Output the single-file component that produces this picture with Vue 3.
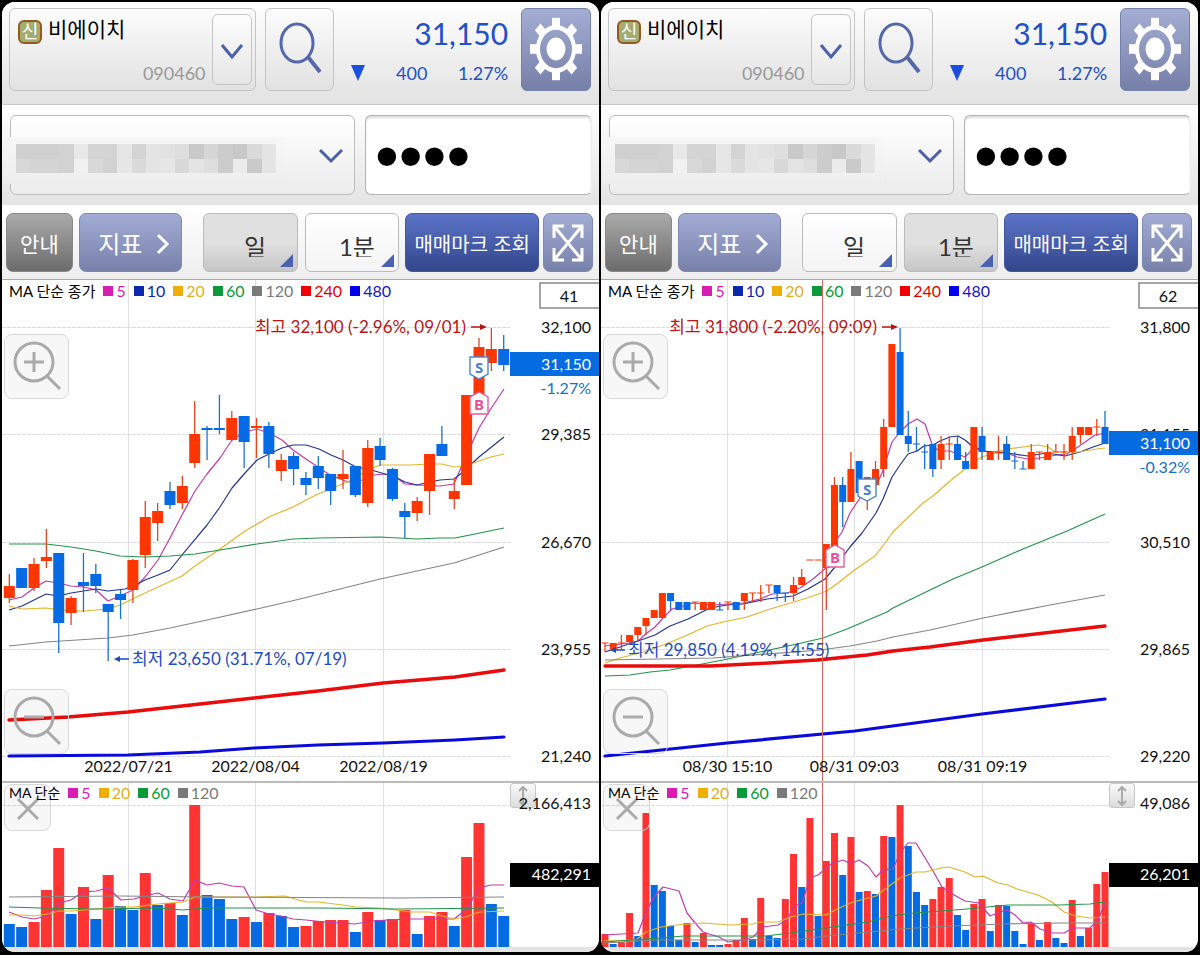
<script setup>
const priceLegend = [
  ['5', '#d81cb4'], ['10', '#0b28b0'], ['20', '#f0ae00', '#e0b020'], ['60', '#0a9a3a'],
  ['120', '#7a7a7a'], ['240', '#f00000', '#e00000'], ['480', '#0000f0', '#1414c8'],
]
const volumeLegend = [
  ['5', '#d81cb4'], ['20', '#f0ae00', '#e0b020'], ['60', '#0a9a3a'], ['120', '#7a7a7a'],
]
const gridX = [128.5, 255.5, 383.5]
const gridY = [327.5, 434.5, 542.5, 649.5, 756.5]
const mosaic = [
  'd0', 'd0', 'd0', 'd2', 'e8', 'd4', 'd4', 'e6', 'd4', 'e4', 'e2', 'de', 'c9', 'd6', 'cc', 'c8', 'da', 'e4',
  'd8', 'd4', 'd4', 'd2', 'f1', 'd8', 'd2', 'e6', 'da', 'e4', 'e6', 'd8', 'e4', 'de', 'cc', 'eb', 'ca', 'e4',
]
const teeth = [0, 45, 90, 135, 180, 225, 270, 315]

/* candle: kind, high, body top, body bottom, low */
const daily = [
  'r 574 586 598 603', 'b 568 568 588 588', 'r 558 564 588 591', 'r 529 557 561 568', 'b 553 553 623 653',
  'r 596 598 613 625', 'b 553 582 586 612', 'b 564 574 586 593', 'b 604 604 612 661', 'b 590 594 600 619',
  'r 559 560 590 603', 'r 501 517 555 568', 'r 503 511 523 541', 'b 482 491 505 509', 'r 476 486 503 509',
  'r 401 434 463 468', 'b 426 428 430 460', 'b 395 428 430 434', 'r 411 418 440 441', 'b 416 416 442 468',
  'r 418 426 428 458', 'b 422 426 454 468', 'r 454 460 471 481', 'b 452 456 469 485', 'b 472 478 485 495',
  'b 456 466 478 489', 'b 474 474 491 505', 'r 450 474 479 489', 'b 466 466 495 497', 'r 440 448 503 507',
  'b 438 446 460 466', 'b 468 469 499 501', 'b 503 511 517 538', 'r 497 501 513 521', 'r 454 454 491 515',
  'b 426 444 456 456', 'r 478 491 499 509', 'r 395 395 485 485', 'r 338 347 396 396', 'r 328 349 363 371',
  'b 335 349 365 371',
]
const minute = [
  'r 643 643 643 652', 'r 643 643 649 649', 'r 635 643 643 649', 'r 635 635 642 645', 'r 627 627 635 642',
  'r 618 618 626 635', 'r 610 610 618 618', 'r 593 593 618 618', 'b 593 593 601 610', 'b 602 602 610 610',
  'b 602 602 610 610', 'r 602 602 602 610', 'r 602 602 610 610', 'r 602 602 610 610', 'b 602 610 610 610',
  'r 602 602 602 610', 'b 602 602 610 610', 'r 593 593 601 610', 'r 593 593 593 602', 'r 585 593 593 602',
  'r 585 585 585 593', 'b 585 585 593 601', 'b 593 593 593 602', 'r 577 585 593 601', 'r 569 577 585 585',
  'r 560 560 560 560', 'r 560 560 560 560', 'r 544 544 568 610', 'r 477 485 560 560', 'b 477 485 502 527',
  'r 452 469 502 502', 'b 461 461 493 493', 'r 477 477 493 510', 'r 461 469 485 485', 'r 419 427 469 477',
  'r 344 344 427 427', 'b 328 352 435 435', 'b 411 436 444 452', 'b 427 444 444 452', 'b 444 452 452 469',
  'b 444 444 469 477', 'r 436 444 460 469', 'r 436 444 444 460', 'b 436 444 460 460', 'b 452 461 469 469',
  'r 427 427 469 469', 'b 427 436 452 460', 'r 452 452 460 460', 'r 436 452 452 460', 'b 436 444 460 460',
  'b 452 461 461 469', 'b 461 469 469 469', 'r 444 452 469 469', 'r 452 452 452 460', 'r 444 452 460 460',
  'r 444 452 452 452', 'r 444 452 452 460', 'r 427 436 452 460', 'r 427 427 435 444', 'r 427 427 435 435',
  'r 419 427 427 436', 'b 411 427 444 444',
]
const build = (rows, first, last, width) => rows.map((row, i) => {
  const [kind, high, top, bottom, low] = row.split(' ')
  const flat = top === bottom
  return {
    kind, high: +high, low: +low, width,
    x: first + ((last - first) * i) / (rows.length - 1),
    y: flat ? +top - 0.5 : +top,
    h: flat ? 1 : bottom - top,
  }
})
const volumes = (kinds, tops, first, last, width) => tops.map((top, i) => ({
  kind: kinds[i], top, width, x: first + ((last - first) * i) / (tops.length - 1),
}))

const panels = [
  {
    name: 'day', count: '41', active: 'day',
    labels: ['32,100', '29,385', '26,670', '23,955', '21,240'],
    tag: '31,150', tagY: 352, change: '-1.27%',
    dates: ['2022/07/21', '2022/08/04', '2022/08/19'],
    high: { text: '최고 32,100 (-2.96%, 09/01)', x: 466, arrow: 471 },
    low: { text: '최저 23,650 (31.71%, 07/19)', x: 132, y: 659, arrow: 114 },
    sell: { x: 479, y: 357 }, buy: { x: 479, y: 392 }, cross: null,
    volumeMax: '2,166,413', volumeTag: '482,291',
    candles: build(daily, 9.3, 503.7, 11),
    lines: [
      ['pink', '9,600 22,597 34,588 46,581 58,583 71,586 84,587 96,590 108,601 120,596 133,590 145,577 158,560 170,538 182,515 195,491 207,474 220,458 232,440 245,432 257,429 269,433 282,440 293,450 306,459 315,465 330,475 348,482 363,480 373,475 385,474 397,478 405,484 417,485 440,486 454,484 463,463 479,428 490,410 504,389'],
      ['navy', '9,610 22,606 46,594 58,596 71,593 96,589 108,591 125,589 133,586 145,580 158,575 170,570 182,555 207,525 220,507 232,488 245,473 257,460 269,454 282,448 293,445 306,445 319,449 331,455 343,460 356,467 368,469 385,474 397,478 405,482 417,485 430,482 440,480 454,479 463,472 479,457 504,437'],
      ['gold', '9,606 22,609 46,608 71,611 84,611 108,609 120,605 145,593 182,576 195,566 220,549 245,531 269,517 293,507 306,500 318,494 331,489 356,478 368,470 380,465 410,465 430,464 442,464 454,467 466,466 479,461 491,457 504,454'],
      ['green', '9,544 46,544 71,547 96,551 120,556 145,557 170,556 195,554 220,550 257,544 293,539 319,538 380,537 417,539 440,538 455,538 470,535 504,528'],
      ['gray', '9,646 46,642 108,638 133,635 170,628 207,620 257,609 300,599 380,579 454,563 504,547'],
      ['red', '9,720 68,717 128,712 191,705 254,698 318,691 383,683 455,677 504,670'],
      ['blue', '9,756 128,755 200,752 254,748 318,745 383,743 455,740 504,737'],
    ],
    bars: volumes('bbrrrbrbrbbrbrbrbbbrbrbbrrrrbrbrrbrrbrrbb',
      [924, 927, 922, 890, 848, 914, 887, 919, 875, 906, 910, 873, 905, 903, 915, 805, 895, 899, 919, 917, 922, 913, 916, 927, 926, 921, 920, 920, 932, 912, 920, 919, 910, 934, 916, 912, 926, 857, 823, 904, 916],
      9.3, 503.7, 11),
    volumeLines: [
      ['pink', '9,912 22,917 34,919 47,916 59,903 71,900 83,892 96,891 108,888 121,900 134,899 145,896 158,893 170,899 183,901 195,880 207,885 219,883 232,886 244,887 256,910 269,914 281,916 293,919 306,920 325,922 355,924 373,921 387,920 411,919 436,919 454,919 467,909 479,888 491,885 504,885'],
      ['gold', '9,915 22,915 34,916 47,914 59,911 71,911 96,909 121,907 134,907 158,904 183,902 195,897 207,897 256,897 285,896 295,899 306,902 318,902 343,905 355,907 380,908 411,912 430,912 442,916 454,919 466,917 479,912 504,911'],
      ['green', '9,907 40,908 96,909 158,908 183,910 207,908 320,908 400,909 504,908'],
      ['gray', '9,897 120,896 207,897 400,898 504,897'],
    ],
  },
  {
    name: 'minute', count: '62', active: 'minute',
    labels: ['31,800', '31,155', '30,510', '29,865', '29,220'],
    tag: '31,100', tagY: 431, change: '-0.32%',
    dates: ['08/30 15:10', '08/31 09:03', '08/31 09:19'],
    high: { text: '최고 31,800 (-2.20%, 09:09)', x: 278, arrow: 283 },
    low: { text: '최저 29,850 (4.19%, 14:55)', x: 29, y: 650, arrow: 11 },
    sell: { x: 268, y: 479 }, buy: { x: 236, y: 545 }, cross: 223.5,
    volumeMax: '49,086', volumeTag: '26,201',
    candles: build(minute, 6, 506, 7),
    lines: [
      ['pink', '6,646 30,643 39,641 48,633 56,627 64,618 73,609 81,607 94,603 114,605 144,603 161,599 173,594 188,593 201,588 214,579 228,567 234,545 243,532 251,513 261,498 277,486 283,473 293,442 301,432 309,424 318,419 326,424 334,447 341,451 351,451 366,457 376,447 383,450 391,453 408,453 418,457 429,459 441,458 458,455 468,454 479,447 496,435 506,433'],
      ['navy', '6,652 18,648 39,641 56,635 71,626 89,619 111,608 128,605 144,604 168,599 194,596 209,589 226,579 236,567 251,547 263,533 277,513 284,499 293,477 301,465 309,454 318,451 325,446 334,445 341,441 351,437 359,436 366,440 374,447 383,451 408,453 429,456 448,453 466,456 481,452 494,447 506,443'],
      ['gold', '6,663 21,658 44,652 64,645 84,637 108,626 124,622 148,617 168,610 188,604 208,598 228,591 243,580 254,571 276,556 286,543 294,532 301,525 324,503 334,496 351,481 366,469 381,458 394,453 408,449 424,447 439,445 449,447 456,452 479,452 498,449 506,448'],
      ['green', '6,676 31,675 51,672 71,670 98,665 124,660 161,652 198,644 224,638 248,629 288,612 294,608 331,590 354,579 383,567 424,549 468,531 506,514'],
      ['gray', '6,660 114,658 221,650 251,646 278,641 294,637 331,630 384,618 451,605 506,595'],
      ['red', '6,666 111,666 170,663 218,660 268,655 294,651 331,647 384,640 506,626'],
      ['blue', '6,756 128,743 256,731 383,714 506,699'],
    ],
    bars: volumes('rbrrbrbbbbrbrbbrrrbrbbrrbrbrrbrbrbrbrbbbrrrbbrrbrbbbrbrbbrbrrr',
      [934, 944, 942, 913, 936, 813, 885, 891, 926, 940, 923, 942, 933, 945, 945, 944, 940, 918, 939, 898, 936, 938, 899, 854, 887, 818, 916, 861, 833, 875, 837, 892, 891, 894, 836, 837, 805, 846, 892, 905, 899, 887, 878, 915, 930, 904, 899, 931, 905, 906, 931, 944, 923, 940, 922, 938, 943, 900, 936, 928, 884, 872],
      6, 506, 7),
    volumeLines: [
      ['pink', '5,935 39,933 47,912 55,897 64,887 80,891 88,913 97,924 104,932 120,937 129,942 143,940 154,937 164,927 179,925 188,920 195,906 203,903 211,878 219,875 227,868 234,863 244,860 252,864 260,860 269,866 277,877 284,870 294,869 301,853 309,843 317,843 334,871 343,887 355,895 366,901 380,903 391,916 399,913 408,910 416,915 424,923 432,922 441,929 453,933 465,933 474,928 491,928 499,920 506,903'],
      ['gold', '5,941 37,940 47,932 62,927 78,925 104,923 131,925 154,924 162,922 179,922 192,917 204,914 227,915 238,909 254,902 277,896 286,889 301,878 317,872 326,872 342,868 350,867 366,872 376,877 384,876 399,883 409,885 418,889 439,895 453,902 465,912 477,916 491,918 506,917'],
      ['green', '5,942 47,939 85,936 166,936 192,933 227,928 269,922 292,916 315,913 368,909 409,905 460,905 491,904 506,902'],
      ['gray', '5,943 58,940 154,940 204,939 227,936 269,932 300,929 353,926 403,924 460,923 506,923'],
    ],
  },
]
</script>

<template>
  <main class="screens">
    <section v-for="p in panels" :key="p.name" class="panel">
      <header class="quote">
        <div class="stock">
          <span class="badge">신</span>
          <span class="stock-name">비에이치</span>
          <span class="stock-code">090460</span>
          <button class="stock-open" type="button" aria-label="종목 선택">
            <svg width="24" height="18" viewBox="0 0 24 18"><path d="M2 2 12 14 22 2" class="chevron" /></svg>
          </button>
        </div>
        <button class="search" type="button" aria-label="종목 검색">
          <svg width="46" height="56" viewBox="0 0 46 56">
            <ellipse cx="20" cy="23" rx="16" ry="19" /><path d="M31 37 43 52" />
          </svg>
        </button>
        <div class="price">
          <strong>31,150</strong>
          <div class="price-row">
            <svg width="14" height="16" viewBox="0 0 14 16"><path d="M0 0h14L7 16z" fill="#1a4fe0" /></svg>
            <span class="diff">400</span><span class="rate">1.27%</span>
          </div>
        </div>
        <button class="settings" type="button" aria-label="설정">
          <svg width="54" height="64" viewBox="-27 -32 54 64">
            <g transform="scale(1 1.2)" fill="#fff">
              <rect v-for="a in teeth" :key="a" x="-4" y="-26" width="8" height="8" :transform="`rotate(${a})`" />
              <circle r="18" fill="none" stroke="#fff" stroke-width="4" /><circle r="9.5" />
            </g>
          </svg>
        </button>
      </header>

      <div class="account-row">
        <div class="account">
          <select aria-label="계좌 선택"><option></option></select>
          <div class="mosaic" aria-hidden="true">
            <i v-for="(c, i) in mosaic" :key="i" :style="{ background: '#' + c + c + c }"></i>
          </div>
          <svg class="account-arrow" width="24" height="16" viewBox="0 0 24 16"><path d="M1 2 12 13 23 2" class="chevron" /></svg>
        </div>
        <input class="password" type="password" value="0000" aria-label="계좌 비밀번호" />
      </div>

      <nav class="tools">
        <button class="guide" type="button">안내</button>
        <button class="indicator" type="button">지표
          <svg width="14" height="22" viewBox="0 0 14 22"><path d="M2 2 11 11 2 20" fill="none" stroke="#fff" stroke-width="3" /></svg>
        </button>
        <div class="period day" :class="{ active: p.active === 'day' }">
          <select aria-label="일봉 주기"><option>일</option></select>
        </div>
        <div class="period minute" :class="{ active: p.active === 'minute' }">
          <select aria-label="분봉 주기"><option>1분</option></select>
        </div>
        <button class="marks" type="button">매매마크 조회</button>
        <button class="expand" type="button" aria-label="전체 화면">
          <svg width="32" height="38" viewBox="0 0 32 38">
            <path d="M2 2 30 36M30 2 2 36M2 14V2h10M20 2h10v12M30 24v12H20M12 36H2V24" />
          </svg>
        </button>
      </nav>

      <div class="chart price-chart">
        <svg class="plot" viewBox="2 280 597 501" role="img" aria-label="가격 차트">
          <g class="grid">
            <path v-for="x in gridX" :key="x" :d="`M${x} 280V756`" />
            <path v-for="y in gridY" :key="y" class="dotted" :d="`M2 ${y}H510`" />
          </g>
          <path v-for="l in p.lines" :key="l[0]" class="line" :class="l[0]" :d="'M' + l[1]" />
          <g v-for="(c, i) in p.candles" :key="i" :class="'candle-' + c.kind">
            <path :d="`M${c.x} ${c.high}V${c.low}`" />
            <rect :x="c.x - c.width / 2" :y="c.y" :width="c.width" :height="c.h" />
          </g>
          <path v-if="p.cross" class="cross" :d="`M${p.cross} 280V781`" />

          <text v-for="(t, i) in p.labels" :key="t" class="axis" x="591" :y="gridY[i] + 5">{{ t }}</text>
          <rect x="540" y="283" width="62" height="25" class="count-box" />
          <text x="569" y="302" class="count">{{ p.count }}</text>
          <rect x="510" :y="p.tagY" width="89" height="24" fill="#056be0" />
          <text x="591" :y="p.tagY + 18" class="axis light">{{ p.tag }}</text>
          <text x="591" :y="p.tagY + 42" class="axis change">{{ p.change }}</text>
          <text v-for="(d, i) in p.dates" :key="d" class="date" :x="gridX[i]" y="772">{{ d }}</text>

          <g class="note high">
            <text :x="p.high.x" y="333">{{ p.high.text }}</text>
            <path :d="`M${p.high.arrow} 327h10`" /><path class="tip" :d="`M${p.high.arrow + 9} 324l7 3-7 3z`" />
          </g>
          <g class="note low">
            <text :x="p.low.x" :y="p.low.y + 6">{{ p.low.text }}</text>
            <path :d="`M${p.low.arrow + 5} ${p.low.y}h10`" />
            <path class="tip" :d="`M${p.low.arrow + 6} ${p.low.y - 3}l-6 3 6 3z`" />
          </g>
          <g class="mark sell" :transform="`translate(${p.sell.x} ${p.sell.y})`">
            <path d="M-9 0H9V17L0 22-9 17z" /><text y="16">S</text>
          </g>
          <g class="mark buy" :transform="`translate(${p.buy.x} ${p.buy.y})`">
            <path d="M-9 22H9V5L0 0-9 5z" /><text y="18">B</text>
          </g>
        </svg>
        <div class="legend">
          <span>MA 단순 종가</span>
          <span v-for="l in priceLegend" :key="l[0]" class="key" :style="{ color: l[2] || l[1] }">
            <i :style="{ background: l[1] }"></i>{{ l[0] }}
          </span>
        </div>
        <button class="float zoom-in" type="button" aria-label="확대">
          <svg width="52" height="52" viewBox="0 0 52 52"><circle cx="23" cy="21" r="19" /><path d="M36 35 49 48M13 21h20M23 11v20" /></svg>
        </button>
        <button class="float zoom-out" type="button" aria-label="축소">
          <svg width="52" height="52" viewBox="0 0 52 52"><circle cx="23" cy="21" r="19" /><path d="M36 35 49 48M13 21h20" /></svg>
        </button>
      </div>

      <div class="chart volume-chart">
        <button class="resize" type="button" aria-label="차트 높이 조절">
          <svg width="12" height="20" viewBox="0 0 12 20"><path d="M6 1v18M2 5l4-4 4 4M2 15l4 4 4-4" /></svg>
        </button>
        <svg class="plot" viewBox="2 783 597 164" role="img" aria-label="거래량 차트">
          <g class="grid">
            <path v-for="x in gridX" :key="x" :d="`M${x} 783V947`" /><path class="dotted" d="M2 805.5H510" />
          </g>
          <rect v-for="(b, i) in p.bars" :key="i" :class="'bar-' + b.kind" :x="b.x - b.width / 2" :y="b.top" :width="b.width" :height="947 - b.top" />
          <path v-for="l in p.volumeLines" :key="l[0]" class="line" :class="l[0]" :d="'M' + l[1]" />
          <path v-if="p.cross" class="cross" :d="`M${p.cross} 783V947`" />
          <text x="591" y="809" class="axis">{{ p.volumeMax }}</text>
          <rect x="510" y="863" width="89" height="24" />
          <text x="591" y="880" class="axis light">{{ p.volumeTag }}</text>
        </svg>
        <div class="legend">
          <span>MA 단순</span>
          <span v-for="l in volumeLegend" :key="l[0]" class="key" :style="{ color: l[2] || l[1] }">
            <i :style="{ background: l[1] }"></i>{{ l[0] }}
          </span>
        </div>
        <button class="float close" type="button" aria-label="지표 닫기">
          <svg width="24" height="24" viewBox="0 0 24 24"><path d="M2 2 22 22M22 2 2 22" /></svg>
        </button>
      </div>
      <footer></footer>
    </section>
  </main>
</template>

<style>
body { margin: 0; background: #000; }
</style>

<style scoped>
* { box-sizing: border-box; }
.screens {
  display: grid; grid-template-columns: 1fr 1fr; gap: 2px; padding: 2px 2px 3px; background: #000;
  font-family: Lato, "Noto Sans CJK KR", sans-serif; font-size: 16px; line-height: 20px; color: #111;
}
.panel { border-radius: 13px; overflow: hidden; background: #fff; min-width: 0; }
button, select, input { font: inherit; color: inherit; margin: 0; padding: 0; }
button { display: flex; align-items: center; justify-content: center; border: 1px solid #bbb; border-radius: 6px; }
svg { display: block; }
.chevron { fill: none; stroke: #4a60a8; stroke-width: 3; }

.quote {
  display: grid; grid-template-columns: minmax(0, 247fr) minmax(0, 79fr) minmax(0, 187fr) minmax(0, 70fr);
  height: 103px; padding: 6px 8px 13px 7px;
  background: linear-gradient(#fff, #e2e2e2); border-bottom: 1px solid #c8c8c8;
}
.stock {
  display: grid; grid-template-columns: 24px 1fr 40px; column-gap: 6px; padding: 5px 3px 5px 8px;
  border: 1px solid #c4c4c4; border-radius: 6px; background: linear-gradient(#fcfcfc, #e2e2e2);
}
.badge {
  width: 24px; height: 24px; margin-top: 6px; border: 2px solid #96591a; border-radius: 6px; background: #a3ad72;
  color: #fff; font-size: 18px; line-height: 19px; text-align: center;
}
.stock-name { font-size: 21px; line-height: 26px; margin-top: 2px; color: #000; }
.stock-code { grid-column: 1 / 3; grid-row: 2; justify-self: end; align-self: end; font-size: 18px; line-height: 24px; color: #999; }
.stock-open { grid-column: 3; grid-row: 1 / 3; background: linear-gradient(#fdfdfd, #e6e6e6); border-color: #c4c4c4; padding-top: 4px; }
.search { margin-left: 9px; background: linear-gradient(#fcfcfc, #e2e2e2); border-color: #c4c4c4; padding-bottom: 4px; }
.search svg { fill: none; stroke: #5468aa; stroke-width: 3; }
.search path { stroke-width: 4; }
.price { padding: 7px 13px 0 17px; color: #2150c8; text-align: right; }
.price strong { display: block; font-size: 30px; line-height: 36px; font-weight: 400; }
.price-row { display: flex; align-items: center; margin-top: 10px; font-size: 18px; line-height: 24px; }
.diff, .rate { margin-left: auto; }
.settings { background: linear-gradient(#a4add2, #767fa8); border-color: #7580ac; padding-bottom: 2px; }

.account-row {
  display: grid; grid-template-columns: minmax(0, 345fr) minmax(0, 227fr); gap: 10px; height: 100px; padding: 10px 7px 10px 8px;
  background: linear-gradient(#fff, #e4e4e4);
}
.account { position: relative; }
.account select {
  display: block; width: 100%; height: 80px; appearance: none; border: 1px solid #bcbcbc; border-radius: 6px;
  background: linear-gradient(#fff, #ececec);
}
.mosaic {
  position: absolute; left: -6px; top: 22px; width: 284px; height: 47px; padding: 7px 12px 11px;
  display: grid; grid-template-columns: repeat(18, 1fr); grid-template-rows: 1fr 1fr;
  background: linear-gradient(#f6f6f6, #eee);
  mask-image: linear-gradient(90deg, #000 95%, transparent);
}
.account-arrow { position: absolute; right: 12px; top: 33px; }
.password {
  width: 100%; height: 80px; padding: 0 9px; border: 1px solid #b4b4b4; border-right-color: #eee; border-radius: 6px;
  background: #fff; box-shadow: inset 0 2px 2px #ddd; font-family: "Liberation Sans", sans-serif; font-size: 68px; color: #000;
}

.tools {
  display: grid; height: 75px; padding: 8px 6px 7px 4px; border-bottom: 1px solid #aaa;
  grid-template-columns:
    minmax(0, 67fr) minmax(0, 109fr) minmax(0, 116fr) minmax(0, 102fr) minmax(0, 140fr) minmax(0, 54fr);
  background: linear-gradient(#fff, #eee);
}
.tools button { border-radius: 7px; color: #fff; white-space: nowrap; padding-top: 2px; }
.tools .guide { background: linear-gradient(#aaa, #6c6c6c); border-color: #888; font-size: 21px; }
.tools .indicator { margin-left: 6px; gap: 14px; padding-left: 8px; font-size: 24px; background: linear-gradient(#a2acd4, #7881aa); border-color: #7d88b4; }
.period {
  position: relative; border: 1px solid #bbb; border-radius: 6px;
  background: linear-gradient(#fff, #f4f4f4);
}
.period.active { background: linear-gradient(#e0e0e0 50%, #c6c6c6); }
.period::after {
  content: ""; position: absolute; right: 4px; bottom: 4px; pointer-events: none;
  border-style: solid; border-width: 0 0 13px 13px; border-color: transparent transparent #4a62b0;
}
.period select {
  width: 100%; height: 100%; padding: 8px 0 0 10px; appearance: none; border: 0; background: none;
  font-size: 24px; color: #333; text-align: center; text-align-last: center;
}
.day { margin-left: 21px; }
.minute { margin-left: 7px; }
.tools .marks { margin-left: 6px; font-size: 20px; background: linear-gradient(#5c74c8, #33468c); border-color: #4356a4; }
.tools .expand { margin-left: 4px; padding: 0; background: linear-gradient(#a2acd4, #7881aa); border-color: #7d88b4; }
.expand svg { fill: none; stroke: #fff; stroke-width: 3; }

.chart { position: relative; }
.plot { width: 100%; height: auto; }
.grid path { stroke: #dfdfdf; stroke-width: 1; }
.grid .dotted { stroke: #dcdcdc; stroke-dasharray: 4 1; }
.line { fill: none; stroke-width: 1.2; stroke-linejoin: round; }
.pink { stroke: #c23aa8; }
.navy { stroke: #24348f; }
.gold { stroke: #e2b62a; }
.green { stroke: #22944a; }
.gray { stroke: #858585; }
.red { stroke: #ea0c0c; stroke-width: 3.4; stroke-linecap: round; }
.blue { stroke: #0a0add; stroke-width: 3.2; stroke-linecap: round; }
.candle-r { fill: #ff3600; stroke: #e8441c; }
.candle-b { fill: #046be4; stroke: #1b74c8; }
.candle-r rect, .candle-b rect { stroke: none; }
.candle-r path, .candle-b path { stroke-width: 1.3; }
.bar-r { fill: #ff3433; }
.bar-b { fill: #056be0; }
.cross { stroke: #d66a5a; stroke-width: 1; }
.axis { text-anchor: end; fill: #111; }
.light { fill: #fff; }
.change { fill: #1570c8; }
.count-box { fill: #fff; stroke: #888; stroke-width: 1.5; }
.count, .date { text-anchor: middle; fill: #111; }
.note text { font-size: 17px; }
.note path { stroke-width: 1.5; }
.note .tip { stroke: none; }
.high { fill: #b81414; stroke: none; }
.high text { text-anchor: end; }
.high path { stroke: #b81414; }
.low { fill: #1c4cc0; }
.low path { stroke: #1c4cc0; }
.mark path { fill: #fff; stroke-width: 1.4; }
.mark text { text-anchor: middle; font-family: "Noto Sans", sans-serif; font-size: 15px; font-weight: 700; }
.sell path { stroke: #4a86c8; }
.sell text { fill: #4a80cc; }
.buy path { stroke: #e45c9c; }
.buy text { fill: #e4509a; }

.legend {
  position: absolute; z-index: 1; left: 7px; top: 1px; display: flex; gap: 8px; pointer-events: none;
  line-height: 20px; font-size: 15px; white-space: nowrap; color: #000;
}
.key { display: flex; align-items: center; gap: 3px; font-size: 16px; }
.key i { width: 10px; height: 10px; }
.float { position: absolute; left: 2px; border: 1px solid #d8d8d8; border-radius: 8px; background: #00000008; }
.float svg { fill: none; stroke: #aaa; stroke-width: 3; }
.zoom-in, .zoom-out { width: 65px; height: 65px; }
.zoom-in { top: 54px; }
.zoom-out { top: 409px; }
.close { width: 47px; height: 47px; top: 1px; padding-top: 2px; }
.volume-chart { border-top: 2px solid #bbb; }
.volume-chart .legend { top: 0; font-size: 14px; }
.resize {
  position: absolute; right: 63px; top: 0; width: 26px; height: 25px; border: 1px solid #c8c8c8; border-radius: 3px;
  background: linear-gradient(#fafafa, #ddd);
}
.resize svg { fill: none; stroke: #aaa; stroke-width: 2; }
.volume-chart .plot { position: relative; }
footer { height: 5px; background: #e4e4e4; }
</style>
